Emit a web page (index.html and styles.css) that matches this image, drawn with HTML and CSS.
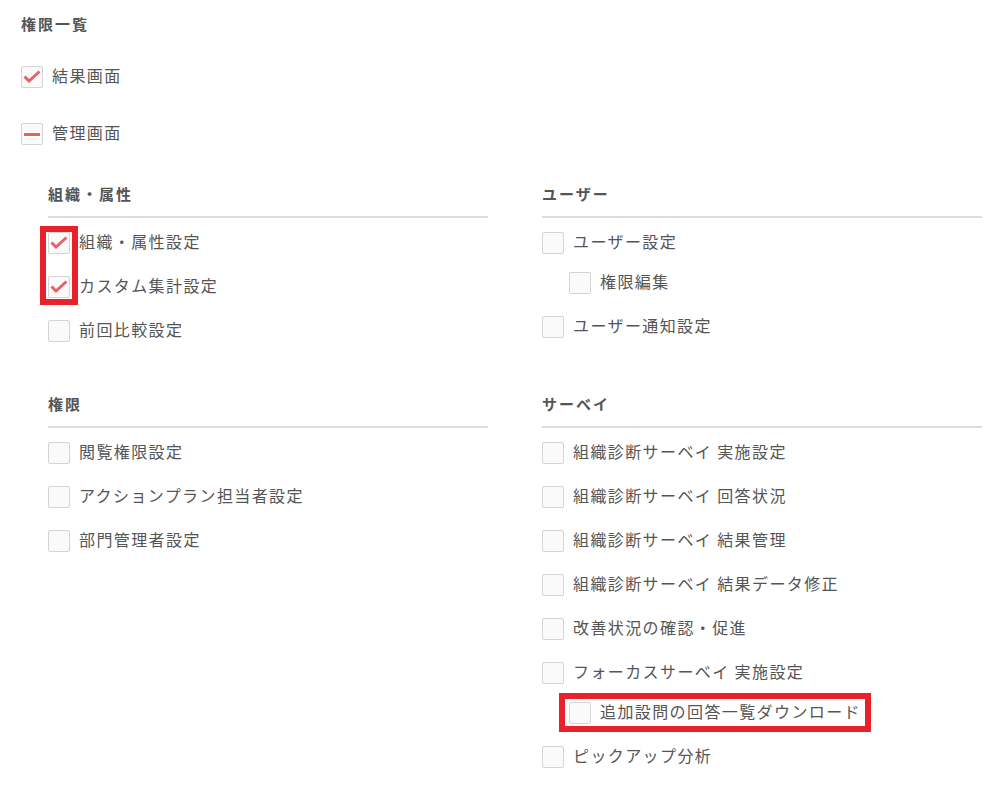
FILE: index.html
```html
<!DOCTYPE html>
<html lang="ja">
<head>
    <meta charset="UTF-8">
    <title>権限一覧</title>
    <link rel="stylesheet" href="styles.css">
</head>
<body>

<h2 class="title">権限一覧</h2>

<div class="top-item">
    <span class="box"><svg class="check" viewBox="0 0 20 20"><polyline points="2.5,9.5 7,14 17.5,4.5"/></svg></span>
    <span class="label">結果画面</span>
</div>
<div class="top-item second">
    <span class="box partial"></span>
    <span class="label">管理画面</span>
</div>

<div class="sections">
    <div class="section">
        <h3 class="section-title">組織・属性</h3>
        <div class="item">
            <span class="mark mark-left"></span>
            <span class="box"><svg class="check" viewBox="0 0 20 20"><polyline points="2.5,9.5 7,14 17.5,4.5"/></svg></span><span class="label">組織・属性設定</span>
        </div>
        <div class="item">
            <span class="box"><svg class="check" viewBox="0 0 20 20"><polyline points="2.5,9.5 7,14 17.5,4.5"/></svg></span><span class="label">カスタム集計設定</span>
        </div>
        <div class="item"><span class="box"></span><span class="label">前回比較設定</span></div>
    </div>

    <div class="section">
        <h3 class="section-title">ユーザー</h3>
        <div class="item"><span class="box"></span><span class="label">ユーザー設定</span></div>
        <div class="item child"><span class="box"></span><span class="label">権限編集</span></div>
        <div class="item"><span class="box"></span><span class="label">ユーザー通知設定</span></div>
    </div>

    <div class="section">
        <h3 class="section-title">権限</h3>
        <div class="item"><span class="box"></span><span class="label">閲覧権限設定</span></div>
        <div class="item"><span class="box"></span><span class="label">アクションプラン担当者設定</span></div>
        <div class="item"><span class="box"></span><span class="label">部門管理者設定</span></div>
    </div>

    <div class="section">
        <h3 class="section-title">サーベイ</h3>
        <div class="item"><span class="box"></span><span class="label">組織診断サーベイ 実施設定</span></div>
        <div class="item"><span class="box"></span><span class="label">組織診断サーベイ 回答状況</span></div>
        <div class="item"><span class="box"></span><span class="label">組織診断サーベイ 結果管理</span></div>
        <div class="item"><span class="box"></span><span class="label">組織診断サーベイ 結果データ修正</span></div>
        <div class="item"><span class="box"></span><span class="label">改善状況の確認・促進</span></div>
        <div class="item"><span class="box"></span><span class="label">フォーカスサーベイ 実施設定</span></div>
        <div class="item child">
            <span class="mark mark-right"></span>
            <span class="box"></span><span class="label">追加設問の回答一覧ダウンロード</span>
        </div>
        <div class="item"><span class="box"></span><span class="label">ピックアップ分析</span></div>
    </div>
</div>

</body>
</html>
```

FILE: styles.css
```css
body {
    margin: 0;
    padding: 0 21px;
    font-family: "Noto Sans CJK JP", "Noto Sans", sans-serif;
    color: #555;
    background-color: white;
}

.title {
    margin: 14px 0 0;
    font-size: 15px;
    line-height: 20px;
    font-weight: bold;
    letter-spacing: 2px;
}

.top-item {
    display: flex;
    align-items: center;
    height: 22px;
    margin-top: 32px;
}

.top-item.second {
    margin-top: 35px;
}

/* checkbox */
.box {
    position: relative;
    flex: none;
    width: 20px;
    height: 20px;
    border: 1px solid #d4d4d4;
    border-radius: 2px;
    background-color: #fafafa;
    margin-right: 9px;
}

.check {
    display: block;
    width: 20px;
    height: 20px;
    fill: none;
    stroke: #e0646b;
    stroke-width: 3;
}

.box.partial::after {
    content: "";
    position: absolute;
    left: 2px;
    right: 2px;
    top: 9px;
    height: 3px;
    background-color: #e0646b;
}

.label {
    font-size: 16px;
    line-height: 22px;
    letter-spacing: 1.4px;
    white-space: nowrap;
    padding-bottom: 4px;
}

.sections {
    display: grid;
    grid-template-columns: 440px 440px;
    column-gap: 54px;
    row-gap: 52px;
    margin: 39px 0 0 27px;
}

.section-title {
    margin: 0 0 14px;
    padding-bottom: 12px;
    border-bottom: 2px solid #dddddd;
    font-size: 15px;
    line-height: 20px;
    font-weight: bold;
    letter-spacing: 2px;
}

.item {
    position: relative;
    display: flex;
    align-items: center;
    height: 22px;
    margin-top: 22px;
}

.section-title + .item {
    margin-top: 0;
}

.item.child {
    margin-top: 18px;
    margin-left: 27px;
}

/* red highlight frames */
.mark {
    position: absolute;
    border: 6px solid #e8212b;
    box-sizing: border-box;
}

.mark-left {
    left: -8px;
    top: -6px;
    width: 38px;
    height: 79px;
}

.mark-right {
    left: -10px;
    top: -9px;
    width: 312px;
    height: 39px;
}
```
